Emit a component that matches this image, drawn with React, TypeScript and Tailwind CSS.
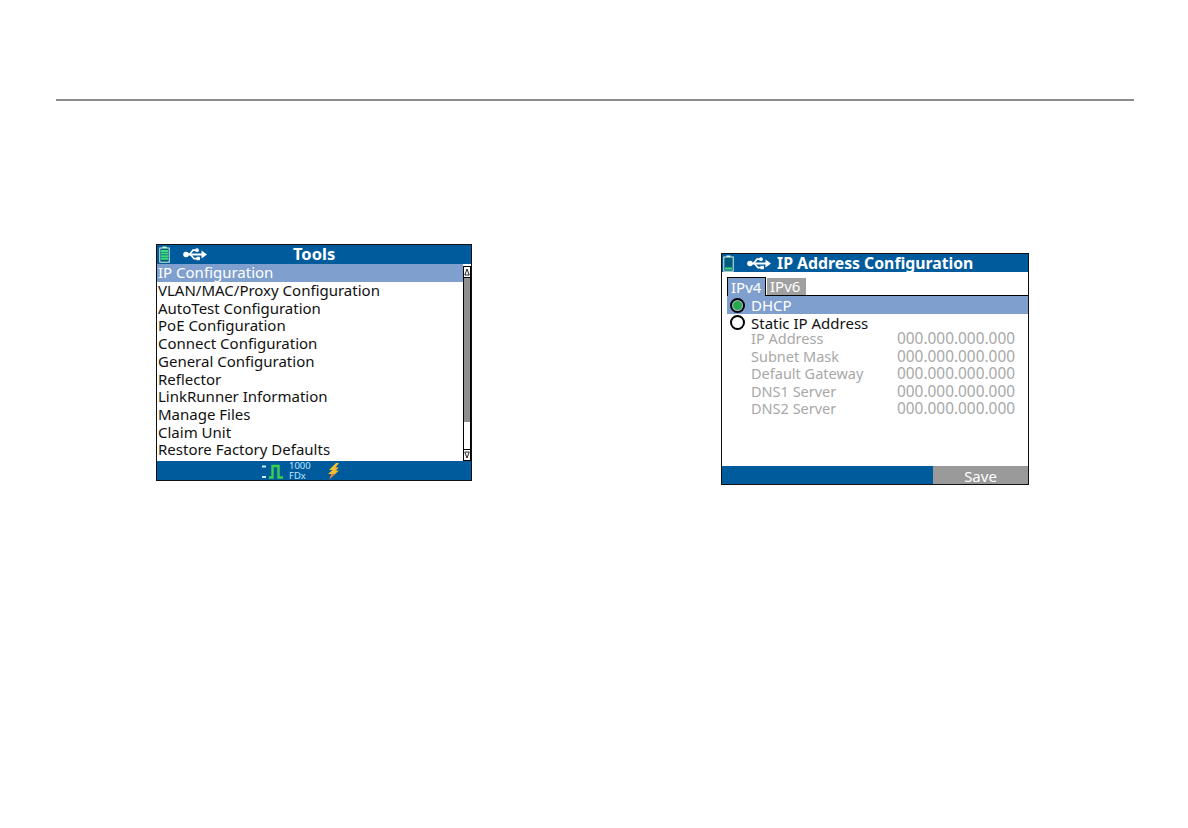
const toolItems = [
  "VLAN/MAC/Proxy Configuration",
  "AutoTest Configuration",
  "PoE Configuration",
  "Connect Configuration",
  "General Configuration",
  "Reflector",
  "LinkRunner Information",
  "Manage Files",
  "Claim Unit",
  "Restore Factory Defaults",
];

const ipFields = ["IP Address", "Subnet Mask", "Default Gateway", "DNS1 Server", "DNS2 Server"];

function Battery({ low }: { low?: boolean }) {
  return (
    <svg width="11" height="17" viewBox="0 0 11 17" fill="none">
      <rect x="3.5" y="0.5" width="4" height="2" fill="#d8f5e0" />
      <rect x="0.8" y="2" width="9.4" height="14.2" fill="#005b7c" stroke="#d8f5e0" strokeWidth="1" />
      <path d={low ? "M2 13.5h7" : "M2 5h7M2 7.6h7M2 10.2h7M2 12.8h7"} stroke="#3ddc78" strokeWidth="2" />
    </svg>
  );
}

function Usb() {
  return (
    <svg width="24" height="13" viewBox="0 0 24 13" fill="none">
      <path d="M3 6.5h17" stroke="#fff" strokeWidth="2" />
      <circle cx="3" cy="6.5" r="2.8" fill="#fff" />
      <path d="M18.5 2.5 24 6.5l-5.5 4Z" fill="#fff" />
      <path d="M6.5 6.5 10 2.2h3.5M7.5 6.5l3.5 4.2h3" stroke="#fff" strokeWidth="1.7" />
      <circle cx="14" cy="2.2" r="1.9" fill="#fff" />
      <rect x="13.5" y="8.8" width="3.4" height="3.4" fill="#fff" />
    </svg>
  );
}

function Pulse() {
  return (
    <svg width="23" height="16" viewBox="0 0 23 16" fill="none">
      <path d="M1 3.5h4M1 14h4" stroke="#c8ecff" strokeWidth="2" />
      <path d="M8 14.5h3.5V3h6v11.5H22" stroke="#38d24a" strokeWidth="2.4" />
    </svg>
  );
}

function Bolt() {
  return (
    <svg width="13" height="16" viewBox="0 0 13 16">
      <path d="M9 0 2 7h3.5L1 11h3.5L2.5 16 12 7.5H8.5L12 4.500H8.5L12 0Z" fill="#f5c02e" />
      <path d="M5 10.5 2.5 16l5.5-5Z" fill="#ea7a3c" />
    </svg>
  );
}

function ScrollArrow({ up }: { up?: boolean }) {
  return (
    <div className="h-[12px] border border-black bg-white flex items-center justify-center">
      <svg width="6" height="8" viewBox="0 0 6 8" fill="none">
        <path d={up ? "M3 1 .8 7h4.4Z" : "M3 7 .8 1h4.4Z"} stroke="#222" strokeWidth="1" />
      </svg>
    </div>
  );
}

function Radio({ on }: { on?: boolean }) {
  return (
    <div className={`w-[15px] h-[15px] rounded-full border-2 border-black flex items-center justify-center ${on ? "bg-[#a8c0dc]" : "bg-white"}`}>
      {on && <div className="w-[9px] h-[9px] rounded-full bg-[#27a84a]" />}
    </div>
  );
}

function ToolsScreen() {
  return (
    <div className="w-[316px] h-[237px] border border-[#111] flex flex-col bg-white">
      <div className="h-[19px] shrink-0 bg-[#005b9c] flex items-center pl-[2px] relative text-white">
        <Battery />
        <div className="ml-[13px]">
          <Usb />
        </div>
        <span className="absolute left-[136px] top-[-1px] font-bold text-[16.5px] leading-[20px]">Tools</span>
      </div>
      <div className="flex-1 flex min-h-0">
        <div className="flex-1 min-w-0 text-[15px] leading-[17.72px] text-[#111]">
          <div className="h-[18px] bg-[#7f9fcf] text-white pl-[1px] leading-[17px]">IP Configuration</div>
          {toolItems.map((item) => (
            <div key={item} className="pl-[1px] whitespace-nowrap">{item}</div>
          ))}
        </div>
        <div className="w-[8px] shrink-0 mt-[2px] flex flex-col">
          <ScrollArrow up />
          <div className="h-[144px] border-x border-black bg-[#8f8f8f]" />
          <div className="flex-1 border-x border-black bg-white" />
          <ScrollArrow />
        </div>
      </div>
      <div className="h-[19px] shrink-0 bg-[#005b9c] flex items-center pl-[104px]">
        <Pulse />
        <div className="ml-[5px] w-[38px] text-[9.5px] leading-[10px] text-[#bfe6ff]">
          <div>1000</div>
          <div>FDx</div>
        </div>
        <Bolt />
      </div>
    </div>
  );
}

function IpScreen() {
  return (
    <div className="w-[308px] h-[232px] border border-[#111] flex flex-col bg-white">
      <div className="h-[18px] shrink-0 bg-[#005b9c] flex items-center pl-[1px] text-white">
        <Battery low />
        <div className="ml-[13px]">
          <Usb />
        </div>
        <span className="ml-[6px] font-bold text-[15.8px] leading-[20px] whitespace-nowrap">IP Address Configuration</span>
      </div>
      <div className="flex pl-[5px] pt-[5px] h-[24px] shrink-0 text-[15px] leading-[18px] text-white">
        <div className="w-[39px] h-[19px] bg-[#7f9fcf] border-t border-x border-black pl-[3px]">IPv4</div>
        <div className="flex-1 h-[19px] border-b border-black">
          <div className="w-[39px] h-[17px] mt-[1px] ml-[1px] bg-[#a0a0a0] pl-[3px] leading-[17px]">IPv6</div>
        </div>
      </div>
      <div className="ml-[5px] h-[18px] shrink-0 bg-[#7f9fcf] flex items-center pl-[3px] text-[15px] text-white">
        <Radio on />
        <span className="ml-[6px] leading-[16px]">DHCP</span>
      </div>
      <div className="h-[17px] shrink-0 flex items-center pl-[8px] text-[15px] text-[#111]">
        <Radio />
        <span className="ml-[6px] leading-[14px]">Static IP Address</span>
      </div>
      <div className="-mt-[1px] pl-[29px] pr-[13px] text-[14.5px] leading-[17.5px] text-[#a8a8a8]">
        {ipFields.map((field) => (
          <div key={field} className="flex justify-between">
            <span>{field}</span>
            <span className="text-[15.4px]">000.000.000.000</span>
          </div>
        ))}
      </div>
      <div className="mt-auto h-[18px] shrink-0 bg-[#005b9c] flex justify-end">
        <div className="w-[95px] bg-[#9a9a9a] text-white text-[15px] leading-[20px] text-center">Save</div>
      </div>
    </div>
  );
}

export default function App() {
  return (
    <div className="w-[1188px] h-[828px] bg-white pt-[99px] pl-[56px] font-['Noto_Sans','DejaVu_Sans',sans-serif] overflow-hidden">
      <div className="w-[1078px] h-[2px] bg-[#8c8c8c]" />
      <div className="flex items-start">
        <div className="ml-[100px] mt-[143px]">
          <ToolsScreen />
        </div>
        <div className="ml-[249px] mt-[152px]">
          <IpScreen />
        </div>
      </div>
    </div>
  );
}
